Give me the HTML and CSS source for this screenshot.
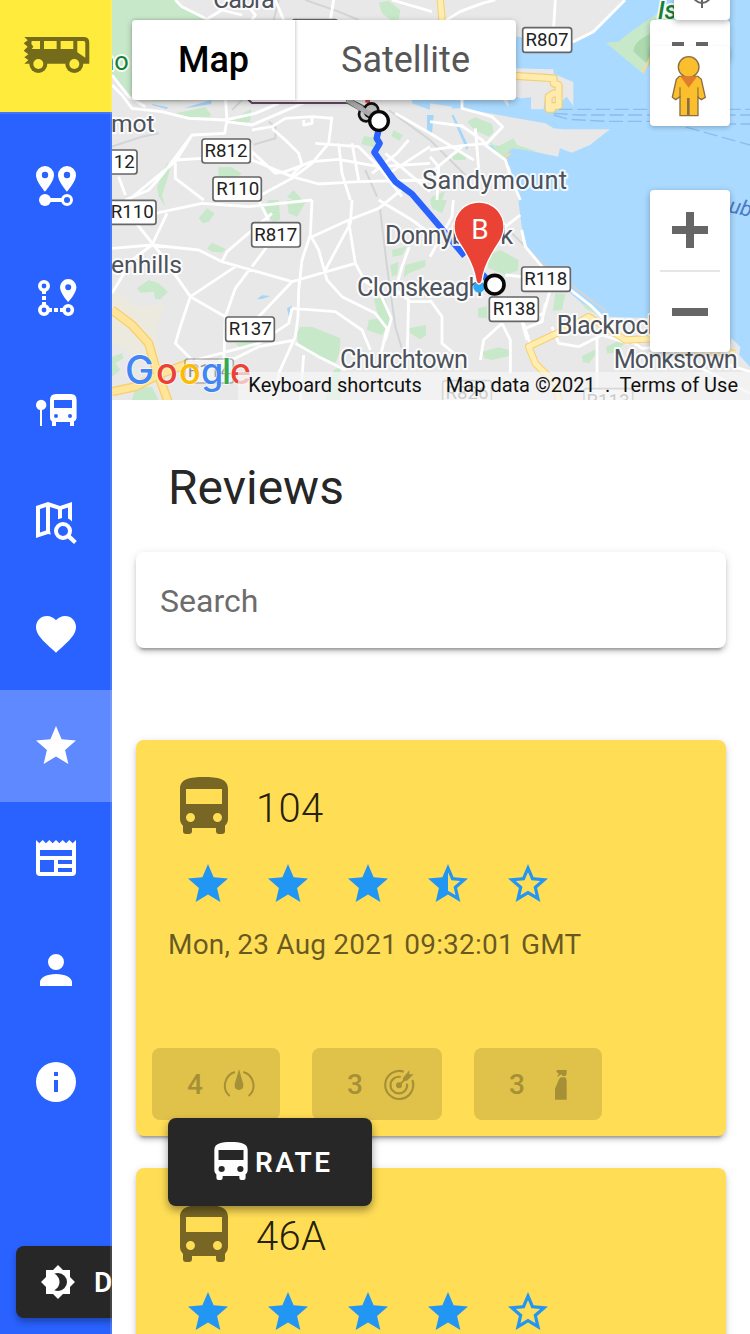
FILE: index.html
```html
<!DOCTYPE html>
<html lang="en">
<head>
<meta charset="utf-8">
<title>Reviews</title>
<link rel="stylesheet" href="styles.css">
</head>
<body>
<svg class="defs" aria-hidden="true">
  <symbol id="bus" viewBox="0 0 24 24" preserveAspectRatio="none"><path d="M18,11H6V6H18M16.5,17A1.5,1.5 0 0,1 15,15.5A1.5,1.5 0 0,1 16.5,14A1.5,1.5 0 0,1 18,15.5A1.5,1.5 0 0,1 16.5,17M7.5,17A1.5,1.5 0 0,1 6,15.5A1.5,1.5 0 0,1 7.5,14A1.5,1.5 0 0,1 9,15.5A1.5,1.5 0 0,1 7.5,17M4,16C4,16.88 4.39,17.67 5,18.22V20A1,1 0 0,0 6,21H7A1,1 0 0,0 8,20V19H16V20A1,1 0 0,0 17,21H18A1,1 0 0,0 19,20V18.22C19.61,17.67 20,16.88 20,16V6C20,2.5 16.42,2 12,2C7.58,2 4,2.5 4,6V16Z"/></symbol>
  <symbol id="star" viewBox="0 0 24 24"><path d="M12,17.27L18.18,21L16.54,13.97L22,9.24L14.81,8.62L12,2L9.19,8.62L2,9.24L7.45,13.97L5.82,21L12,17.27Z"/></symbol>
  <symbol id="star-half" viewBox="0 0 24 24"><path fill-rule="evenodd" d="M12,15.4V6.1L13.71,10.13L18.09,10.5L14.77,13.39L15.76,17.67ZM22,9.24L14.81,8.63L12,2L9.19,8.63L2,9.24L7.45,13.97L5.82,21L12,17.27L18.18,21L16.54,13.97L22,9.24Z"/></symbol>
  <symbol id="star-empty" viewBox="0 0 24 24"><path fill-rule="evenodd" d="M12,15.39L8.24,17.66L9.23,13.38L5.91,10.5L10.29,10.13L12,6.09L13.71,10.13L18.09,10.5L14.77,13.38L15.76,17.66ZM22,9.24L14.81,8.63L12,2L9.19,8.63L2,9.24L7.45,13.97L5.82,21L12,17.27L18.18,21L16.54,13.97L22,9.24Z"/></symbol>
</svg>
<div class="app">
  <aside class="sidebar">
    <div class="brand">
      <svg class="brand-icon" viewBox="68 105 202 118">
        <path fill="#756c1b" d="M72 111H252Q267 112 267 128V191H72L84 180L72 172L84 163L70 152L82 140L70 130L82 121Z"/>
        <circle cx="114" cy="192" r="27" fill="#756c1b"/><circle cx="222" cy="192" r="27" fill="#756c1b"/>
        <g fill="#ffeb3b"><circle cx="114" cy="192" r="15"/><circle cx="222" cy="192" r="15"/><path d="M94 123H119V147H94L99 140L93 132ZM131 123H169V147H131ZM181 123H219V147H181ZM231 123H250Q255 123 255 128V173L231 157Z"/></g>
      </svg>
    </div>
    <nav class="nav">
      <a class="nav-item"><svg class="icon" viewBox="0 0 24 24"><path fill-rule="evenodd" d="M6.5 2A4.5 4.5 0 0 0 2 6.5C2 9.8 6.5 14.8 6.5 14.8S11 9.8 11 6.5A4.5 4.5 0 0 0 6.500 2ZM6.500 4.900A1.600 1.600 0 1 1 6.500 8.100A1.600 1.600 0 1 1 6.500 4.900ZM17.500 2A4.500 4.500 0 0 0 13 6.500C13 9.800 17.500 14.800 17.500 14.800S22 9.800 22 6.500A4.500 4.500 0 0 0 17.500 2ZM17.500 4.900A1.600 1.600 0 1 1 17.500 8.100A1.600 1.600 0 1 1 17.500 4.900Z"/><circle cx="6.500" cy="19" r="3"/><path d="M8 18H15V20H8Z"/><circle cx="17.500" cy="19" r="2.250" class="ring"/></svg></a>
      <a class="nav-item"><svg class="icon" viewBox="0 0 24 24"><path fill-rule="evenodd" d="M18.100 2.500A4.100 4.100 0 0 0 14 6.600C14 9.600 18.100 14 18.100 14S22.200 9.600 22.200 6.600A4.100 4.100 0 0 0 18.100 2.500ZM18.100 5.100A1.500 1.500 0 1 1 18.100 8.100A1.500 1.500 0 1 1 18.100 5.100Z"/><g class="ring-thick"><circle cx="6" cy="6" r="2.100"/><circle cx="6" cy="18" r="2.100"/><circle cx="18.100" cy="18" r="2.100"/></g><path d="M5 8H7V10H5ZM5 11H7V13H5ZM5 14H7V16H5ZM8.500 17H10V19H8.500ZM11 17H13V19H11ZM14 17H15.500V19H14Z"/></svg></a>
      <a class="nav-item"><svg class="icon" viewBox="0 0 24 24"><path fill-rule="evenodd" d="M4 12C2.800 11.800 2 10.700 2 9.500A2.600 2.600 0 0 1 7.200 9.500C7.200 10.700 6.300 11.800 5 12V20H4ZM12 4H19.500Q22.300 4 22.300 7V16Q22.300 17.200 21 17.700V20H19V18H12V20H10V17.700Q9 17.200 9 16V7Q9 4 12 4ZM11 7V11H20V7ZM12 14A1 1 0 1 0 12 16A1 1 0 1 0 12 14ZM19 14A1 1 0 1 0 19 16A1 1 0 1 0 19 14Z"/></svg></a>
      <a class="nav-item"><svg class="icon" viewBox="0 0 24 24"><path fill-rule="evenodd" d="M2 4L8 2L14 4L20 2V11.800Q19.200 10.800 18 10.300V4.700L15 5.800V10L13 10.600V5.800L9 4.500V16.500L9.400 18.200L8 18L2 20ZM4 5.500V17.200L7 16.200V4.500Z"/><circle cx="15.500" cy="16.500" r="3.500" class="ring-lg"/><path d="M17.400 19.800L19 18.200L22.400 21.500L21 23Z"/></svg></a>
      <a class="nav-item"><svg class="icon" viewBox="0 0 24 24"><path d="M12,21.350L10.550,20.030C5.400,15.360 2,12.270 2,8.500C2,5.410 4.420,3 7.500,3C9.240,3 10.910,3.810 12,5.080C13.090,3.810 14.760,3 16.500,3C19.580,3 22,5.410 22,8.500C22,12.270 18.600,15.360 13.450,20.030L12,21.350Z"/></svg></a>
      <a class="nav-item nav-item-active"><svg class="icon"><use href="#star"/></svg></a>
      <a class="nav-item"><svg class="icon" viewBox="0 0 24 24"><path fill-rule="evenodd" d="M20,11H4V8H20ZM20,15H13V13H20ZM20,19H13V17H20ZM11,19H4V13H11ZM20.330,4.670L18.670,3L17,4.670L15.330,3L13.670,4.670L12,3L10.330,4.670L8.670,3L7,4.670L5.330,3L3.670,4.670L2,3V19A2,2 0 0,0 4,21H20A2,2 0 0,0 22,19V3L20.330,4.670Z"/></svg></a>
      <a class="nav-item"><svg class="icon" viewBox="0 0 24 24"><path d="M12,4A4,4 0 0,1 16,8A4,4 0 0,1 12,12A4,4 0 0,1 8,8A4,4 0 0,1 12,4M12,14C16.420,14 20,15.790 20,18V20H4V18C4,15.790 7.580,14 12,14Z"/></svg></a>
      <a class="nav-item"><svg class="icon" viewBox="0 0 24 24"><path fill-rule="evenodd" d="M13,9H11V7H13ZM13,17H11V11H13ZM12,2A10,10 0 0,0 2,12A10,10 0 0,0 12,22A10,10 0 0,0 22,12A10,10 0 0,0 12,2Z"/></svg></a>
    </nav>
    <button class="dark-toggle"><svg class="dark-icon" viewBox="0 0 24 24"><path fill-rule="evenodd" d="M12,18C11.110,18 10.260,17.800 9.500,17.450C11.560,16.500 13,14.420 13,12C13,9.580 11.560,7.500 9.500,6.550C10.260,6.200 11.110,6 12,6A6,6 0 0,1 18,12A6,6 0 0,1 12,18ZM20,8.690V4H15.310L12,0.690L8.690,4H4V8.690L0.690,12L4,15.310V20H8.690L12,23.310L15.310,20H20V15.310L23.310,12L20,8.690Z"/></svg>Dark</button>
  </aside>
  <main class="main">
    <section class="map">
      <svg class="map-canvas" viewBox="0 0 1914 1200">
        <rect width="1914" height="1200" fill="#e8e8e8"/>
        <!-- coast and harbour -->
        <path fill="#aadaff" d="M1539 0L1444 100L1384 130L1200 108V205H900V310L954 330L1044 325L1150 350L1124 435L1194 500L1219 600L1229 680L1250 755L1310 830L1364 870L1434 930L1484 950L1620 955L1854 1035L1914 1100V0Z"/>
        <g fill="#e8e8e8">
          <path d="M1200 205L1324 208L1326 222L1384 246V318L1364 290L1330 320L1300 280L1295 328H1257V292L1225 295L1185 280L1190 322L1165 290L900 260V235L1200 245ZM954 310L1020 320L1018 345L954 340ZM1050 325L1160 345L1300 370L1325 385L1354 388H1494L1434 435L1379 458L1344 445L1338 470L1204 442L1124 435L1050 400ZM1858 1015L1885 1040L1880 1080L1850 1060Z"/>
        </g>
        <path fill="#c8e8ca" d="M0 0H190L225 28L280 60V170L210 302H130L60 290L0 225ZM800 8L830 2L865 30L860 62L835 60L810 40ZM1482 128L1520 125Q1550 95 1700 0H1800L1640 150L1590 218ZM190 340L280 322L298 345L290 352H235ZM350 362L418 328L415 365L365 372ZM755 408L795 415L785 442L748 432ZM845 390L872 405L862 422L838 408ZM165 490L178 490L165 540L150 585L160 620L140 590L135 560ZM318 502L355 500L388 520L380 530H320ZM525 590L545 570L572 600L560 610ZM1065 365L1090 352L1140 372L1145 395L1132 410L1090 392ZM1130 425L1155 440L1205 415L1215 435L1280 455L1200 445L1170 475ZM1020 470L1045 455L1064 460L1060 480H1025ZM455 620L470 600H500L505 660L485 665L465 650ZM525 600H585L555 650L530 640ZM260 655L285 625L308 640L290 665L272 670ZM285 745L300 728L342 748L330 758L300 755ZM75 865L110 840L140 850L168 875L145 898H130L125 875L85 878ZM1120 770L1165 750L1220 780L1218 812L1180 825L1130 805ZM565 980L600 980L685 1015L682 1060L670 1088L600 1065L560 1040L555 1000ZM785 895H820L838 960L822 985L810 1005L765 990L770 960L800 955ZM840 750L885 738L870 765L842 770ZM835 795L860 785L855 825L840 830ZM880 795L940 780V800L890 820L875 835ZM892 985L942 975V1005L925 1018L895 1000ZM1330 880L1360 882L1350 930L1322 932ZM1405 905L1450 930L1475 955L1420 925ZM1098 925L1125 918V955L1098 952ZM1110 1055L1160 1042L1192 1050V1068L1140 1080L1118 1075ZM1410 1068L1464 1042L1450 1065L1430 1090L1412 1085ZM1482 1040L1515 1025L1538 1030L1510 1060H1485ZM0 1070L30 1060L35 1075L10 1090L25 1110L0 1130ZM60 1200L70 1165L120 1160L140 1200ZM954 600H1005L990 640L960 625ZM370 1030L440 1022L420 1043L380 1040ZM640 1200L665 1110L685 1100V1200ZM960 590L1000 572L990 600H955Z"/>
        <path fill="#acd9ad" d="M1565 155Q1560 110 1700 70L1650 135L1620 205Z"/>
        <path fill="#a5d6fa" d="M120 312L168 322L165 328L122 316ZM215 325L298 300V312L240 322ZM435 898L450 886L475 888L450 897ZM525 925L540 917L530 950ZM945 345H965L960 400L945 390ZM1025 345L1070 440L1064 450L1018 345Z"/>
        <path fill="#f9d99a" d="M1170 480L1185 460H1200L1178 478ZM1590 215L1615 165L1610 190L1595 222Z"/>
        <path fill="#eceade" d="M0 860L70 920L160 915L130 990L145 1100L0 1030Z"/>
        <!-- rail and minor lines -->
        <g fill="none" stroke="#d2d4d6" stroke-width="6"><path d="M0 440L90 410L140 400M360 330L400 290M425 434L490 415L490 380L470 365M500 0L485 60M580 0L680 35L740 60M804 625L825 800L850 980L880 1080M760 510L795 590M830 330L954 420L1060 525M1200 700L1290 790L1484 935"/></g>
        <!-- streets -->
        <g fill="none" stroke="#fff" stroke-width="8.500" stroke-linejoin="round">
          <path d="M190 0L210 20L280 55M280 60L330 30L390 45M410 20L430 45L420 60M490 0L515 60M665 0L655 60M840 0L960 35M955 90L1044 35L1110 10L1150 0M1330 0L1325 80M1539 0L1444 95L1384 125"/>
          <path d="M0 255L30 285L60 325L150 335L230 355L340 360L430 340L500 310M0 225L50 290L100 320M340 290L345 360L338 400L240 405L150 525L110 570L40 600M345 365L420 375L560 315L600 300M240 405L190 485L50 600M20 530L40 585M190 480L270 475M190 490V535L275 600M415 430L420 480L540 530L620 552L740 545L954 540M420 455L490 520L520 515L600 485L680 478L800 500L954 490M420 390L480 380L520 355L600 350L660 355M480 385L520 420L560 460L570 495L535 530M600 350V370L575 375V360M660 350L650 430L600 490L540 535L420 600M610 430L740 440L800 500L870 590M680 430L690 520L715 600M720 430L740 540M850 340L954 400L1085 480M780 520L855 460L890 420M820 460L954 575M830 520L954 440"/>
          <path d="M1050 300V325L1140 350L1172 380L1120 435L1180 480L1200 540L1225 600M954 365L1050 378L1110 420L1124 435M954 450L1050 437L1124 430M1090 385L1100 505M954 520L1050 440M1090 520V560M954 470L980 500L975 600"/>
          <path d="M0 745L120 735L260 750L330 785L540 845L730 790M130 640L270 610L410 620L600 600M120 735L165 640M65 660L145 760L235 890L340 950M120 735L60 780L0 880M235 890L370 800M235 890L205 980L190 1030L240 1080M330 785L345 755L480 640M540 845L450 940L420 970M420 800L480 720M415 805L370 865L340 950L335 1100M600 600L595 705L570 780L560 870L558 950L550 1010L500 1120L490 1200M595 705L620 750L645 840L690 890L790 940L825 985L805 1070M600 710L710 660L800 625L880 560M720 600L715 670L640 810M710 665L730 790L760 845L800 870L838 955L820 1020M800 600L900 660L954 700M892 740L870 800L850 870L890 900L885 1080M885 905H954M540 925L670 935L750 990L775 1050M540 925L530 970L440 1030L250 1080M550 1020L440 1040L370 1075L320 1080M550 1030L620 1070L700 1110M575 1065L565 1200M440 600L470 660"/>
          <path d="M1024 600L1020 650L954 770M1225 645L1180 680L1150 740M1229 690L1240 740L1290 800L1370 865L1440 920L1510 990L1590 1045L1680 1040L1914 1115M1180 825L1320 840L1360 865M1320 850L1295 940L1230 965L1245 1020M1235 970L1255 1035M1320 980L1340 1030L1400 1040L1470 1005L1550 1030M1455 1010V1200M1170 970L1195 1020V1120M954 900L990 950V1030L1050 1080M1170 970L1115 1020L1105 1080M1300 910L1290 965L1240 985M1720 1080L1914 1180"/>
        </g>
        <g fill="none" stroke-linejoin="round">
          <path stroke="#f9cf6b" stroke-width="28" d="M0 930L60 975L110 1030L130 1100L170 1210M0 1175L70 1160L150 1120L230 1090"/>
          <path stroke="#ffe59a" stroke-width="20" d="M0 930L60 975L110 1030L130 1100L170 1210M0 1175L70 1160L150 1120L230 1090"/>
          <path stroke="#f9cf6b" stroke-width="22" d="M1365 985L1250 1040L1270 1090L1330 1150L1340 1200M1340 1000L1430 950L1540 1020L1640 1015M1700 1050L1870 1060M985 0L990 60"/>
          <path stroke="#ffeeb0" stroke-width="16" d="M1365 985L1250 1040L1270 1090L1330 1150L1340 1200M1340 1000L1430 950L1540 1020L1640 1015M1700 1050L1870 1060M985 0L990 60"/>
          <path stroke="#f3cf73" stroke-width="24" d="M1200 227L1325 235V250L1340 255V318H1320V327H1310V290L1325 280H1337"/><path stroke="#ffebab" stroke-width="17" d="M1200 227L1325 235V250L1340 255V318H1320V327H1310V290L1325 280H1337"/>
          <g stroke="#8cbcf0" stroke-width="4" stroke-dasharray="42 14"><path d="M1340 328H1914M1325 340L1400 345H1914M1325 345L1370 358L1480 364H1660M1614 350L1700 375L1914 435M1830 372H1914"/></g>
        </g>
        <!-- route -->
        <path fill="none" stroke="#2962ff" stroke-width="19" stroke-linejoin="round" d="M801 385L794 415L803 430L787 457L835 525L850 545L900 582L954 645L1058 768M1100 810L1140 855"/>
        <path fill="#fff" stroke="#654664" stroke-width="6" d="M410 200V300L420 309H705V200"/>
        <path stroke="#bbb" stroke-width="15" d="M705 300L775 345"/><path stroke="#555" stroke-width="4" fill="none" d="M715 298L800 340M705 309L770 345"/>
        <path fill="#e53935" d="M760 296H774V308H760Z"/>
        <circle cx="762" cy="343" r="21" fill="#ccc" stroke="#111" stroke-width="8"/><circle cx="778" cy="331" r="21" fill="#bbb" stroke="#111" stroke-width="8"/><path stroke="#aaa" stroke-width="15" d="M710 302L785 350"/>
        <circle cx="801" cy="363" r="28" fill="#fff" stroke="#080808" stroke-width="10"/>
        <!-- labels -->
        <g class="place">
          <text x="303" y="24" textLength="185">Cabra</text>
          <text class="edge" x="128" y="395" text-anchor="end">Ballyfermot</text>
          <text class="edge" x="210" y="818" text-anchor="end">Greenhills</text>
          <text x="930" y="567" textLength="435">Sandymount</text>
          <text x="819" y="731" textLength="384">Donnybrook</text>
          <text x="735" y="887" textLength="376">Clonskeagh</text>
          <text x="684" y="1104" textLength="384">Churchtown</text>
          <text x="1334" y="1001" textLength="312">Blackrock</text>
          <text x="1505" y="1103" textLength="372">Monkstown</text>
          <text class="park" x="50" y="210" text-anchor="end">Pho</text>
          <text class="park island" x="1637" y="58">Is</text>
          <text class="sea" transform="translate(1848 636) rotate(13)">ub</text>
        </g>
        <g class="shield">
          <rect x="541" y="59" width="136" height="72" rx="8"/>
          <rect x="270" y="417" width="145" height="72" rx="8"/><text x="342" y="472">R812</text>
          <rect x="303" y="531" width="145" height="72" rx="8"/><text x="377" y="586">R110</text>
          <rect x="-70" y="450" width="145" height="72" rx="8"/><text x="4" y="505">R112</text>
          <rect x="-13" y="601" width="145" height="72" rx="8"/><text x="61" y="655">R110</text>
          <rect x="419" y="668" width="146" height="73" rx="8"/><text x="491" y="724">R817</text>
          <rect x="341" y="951" width="146" height="73" rx="8"/><text x="415" y="1006">R137</text>
          <rect x="1229" y="801" width="146" height="73" rx="8"/><text x="1301" y="856">R118</text>
          <rect x="1132" y="891" width="147" height="73" rx="8"/><text x="1207" y="946">R138</text>
          <rect x="1232" y="83" width="147" height="74" rx="8"/><text x="1305" y="139">R807</text>
          <g opacity=".45"><rect x="219" y="1077" width="145" height="72" rx="8"/><text x="292" y="1131">R114</text></g>
          <g opacity=".7"><rect x="992" y="1142" width="146" height="73" rx="8"/><text x="1065" y="1197">R826</text><rect x="1416" y="1166" width="146" height="73" rx="8"/><text x="1488" y="1221">R113</text></g>
        </g>
        <!-- destination -->
        <circle cx="1101" cy="861" r="17" fill="#30a9f5"/>
        <circle cx="1148" cy="854" r="28" fill="#fff" stroke="#080808" stroke-width="11"/>
        <path fill="#ea4335" stroke="#fff" stroke-width="4" d="M1101 606C1058 606 1026 640 1026 681C1026 710 1042 727 1059 756Q1086 801 1092 842Q1095 852 1101 852Q1107 852 1110 842Q1116 801 1143 756C1160 727 1176 710 1176 681C1176 640 1144 606 1101 606Z"/>
        <text class="pin-letter" x="1104" y="717">B</text>
      </svg>
      <div class="map-type"><span class="map-type-on">Map</span><span class="map-type-off">Satellite</span></div>
      <div class="fullscreen"><i class="dash"></i><i class="dash"></i></div>
      <div class="compass"><svg class="compass-icon" viewBox="0 0 24 14"><circle cx="12" cy="-1" r="9" fill="none" stroke="#666" stroke-width="2"/><path stroke="#666" stroke-width="2" d="M12 3V13"/></svg></div>
      <div class="pegman"><svg class="pegman-icon" viewBox="724 165 106 186"><g fill="#fbbf2d" stroke="#8a6e43" stroke-width="4"><path d="M749 229H805L815 238L827 292L815 299L805 292V347H778V296H774V347H751V290L738 299L728 292L740 238Z"/><circle cx="777" cy="201" r="31"/></g><path fill="#e07c2b" d="M752 229H803L777 263Z"/><path stroke="#7c613e" stroke-width="3" d="M751 262V290M805 262V292"/></svg></div>
      <div class="zoom"><span class="zoom-btn zoom-in"></span><span class="zoom-btn zoom-out"></span></div>
      <svg class="google" viewBox="0 0 130 50"><text y="33"><tspan class="cap" x="0" fill="#4285f4">G</tspan><tspan x="31" fill="#ea4335">o</tspan><tspan x="54" fill="#fbbc04">o</tspan><tspan x="76" fill="#4285f4">g</tspan><tspan x="97" fill="#34a853">l</tspan><tspan x="105" fill="#ea4335">e</tspan></text></svg>
      <div class="attribution"><span>Keyboard shortcuts</span><span class="map-data">Map data ©2021</span><span class="sep">.</span><span>Terms of Use</span></div>
    </section>
    <section class="reviews">
      <h1 class="title">Reviews</h1>
      <div class="search">Search</div>
      <article class="card">
        <header class="card-head"><svg class="card-bus"><use href="#bus"/></svg><span class="route">104</span></header>
        <div class="stars"><svg><use href="#star"/></svg><svg><use href="#star"/></svg><svg><use href="#star"/></svg><svg><use href="#star-half"/></svg><svg><use href="#star-empty"/></svg></div>
        <div class="date">Mon, 23 Aug 2021 09:32:01 GMT</div>
        <div class="chips">
          <div class="chip"><span>4</span><svg viewBox="273 112 108 108"><path fill="none" stroke="currentColor" stroke-width="6" d="M315 127A42 42 0 0 0 299 199M340 127A42 42 0 0 1 356 199"/><path d="M327 118L340 164Q341 181 327 181Q313 181 314 164Z"/></svg></div>
          <div class="chip chip-wide"><span>3</span><svg viewBox="756 110 108 108"><g fill="none" stroke="currentColor" stroke-width="6.500"><path d="M824 124A42 42 0 1 0 850 149"/><path d="M815 140A25 25 0 1 0 834 160" /></g><circle cx="810" cy="165" r="9"/><path stroke="currentColor" stroke-width="6" d="M810 165L840 135"/><path d="M822 143L841 120V132H854L834 151H822Z"/></svg></div>
          <div class="chip"><span>3</span><svg viewBox="1239 110 108 108"><path d="M1281 119H1310V130L1307 137H1297L1294 132L1281 141L1286 130L1279 124ZM1292 141H1306Q1310 145 1310 153V208H1275V175L1287 147Z"/></svg></div>
        </div>
      </article>
      <article class="card">
        <header class="card-head"><svg class="card-bus"><use href="#bus"/></svg><span class="route">46A</span></header>
        <div class="stars"><svg><use href="#star"/></svg><svg><use href="#star"/></svg><svg><use href="#star"/></svg><svg><use href="#star"/></svg><svg><use href="#star-empty"/></svg></div>
      </article>
    </section>
    <button class="rate"><svg class="rate-icon"><use href="#bus"/></svg>RATE</button>
  </main>
</div>
</body>
</html>
```
FILE: styles.css
```css
* { box-sizing: border-box; }
body { margin: 0; font-family: Roboto, "Liberation Sans", sans-serif; color: rgba(0,0,0,.87); background: #fff; }
svg { display: block; fill: currentColor; flex: none; }
button { border: 0; font: inherit; }
.defs { position: absolute; width: 0; height: 0; }
.app { display: flex; height: 1334px; overflow: hidden; }

.sidebar { position: relative; display: flex; flex-direction: column; width: 112px; flex: none; background: #2962ff; color: #fff; overflow: hidden; }
.sidebar::after { content: ""; position: absolute; top: 0; right: 0; bottom: 0; width: 2px; background: rgba(255,255,255,.14); }
.brand { display: flex; align-items: center; justify-content: center; height: 114px; background: #ffeb3b; border-bottom: 2px solid #4375ff; }
.brand-icon { width: 67.300px; height: 39.300px; margin: 0 0 2px 1px; }
.nav { padding-top: 16px; }
.nav-item { display: flex; align-items: center; justify-content: center; height: 112px; }
.nav-item-active { background: #5f89ff; }
.icon { width: 48px; height: 48px; }
.ring, .ring-thick, .ring-lg { fill: none; stroke: currentColor; stroke-width: 1.500; }
.ring-thick { stroke-width: 1.800; }
.ring-lg { stroke-width: 2; }
.dark-toggle { display: flex; align-items: center; width: 180px; height: 72px; margin: auto 0 16px 16px; padding: 0 24px; border-radius: 8px; background: #272727; color: #fff; font-size: 28px; font-weight: 600; letter-spacing: 2.500px; text-transform: uppercase; box-shadow: 0 4px 6px rgba(0,0,0,.3); }
.dark-icon { width: 36px; height: 36px; margin-right: 18px; }

.main { position: relative; flex: 1; min-width: 0; }
.map { position: relative; height: 400px; overflow: hidden; }
.map-canvas { width: 638px; height: 400px; }
.place { font-size: 76px; fill: #4d535c; stroke: #fff; stroke-opacity: .85; stroke-width: 12px; paint-order: stroke; stroke-linejoin: round; }
.edge { font-size: 74px; }
.park { fill: #188038; }
.island { font-style: italic; font-weight: 500; }
.sea { fill: #4a7bc4; stroke: none; font-style: italic; font-size: 64px; }
.shield { font-size: 56px; text-anchor: middle; fill: #222; }
.shield rect { fill: #fff; stroke: #666; stroke-width: 5px; }
.pin-letter { font-size: 84px; text-anchor: middle; fill: #fff; }

.map-type, .fullscreen, .compass, .pegman, .zoom { position: absolute; background: #fff; box-shadow: 0 2px 6px rgba(0,0,0,.3); }
.map-type { display: flex; left: 20px; top: 20px; width: 384px; height: 80px; border-radius: 4px; font-size: 36px; line-height: 81px; text-align: center; }
.map-type-on { width: 163px; font-weight: 500; color: #000; box-shadow: 1px 0 3px rgba(0,0,0,.2); }
.map-type-off { flex: 1; color: #565656; }
.fullscreen { display: flex; justify-content: center; gap: 12px; top: 20px; right: 20px; width: 80px; height: 40px; padding-top: 22px; border-radius: 4px; }
.dash { width: 12px; height: 4px; background: #666; }
.compass { top: -20px; right: 20px; width: 56px; height: 40px; padding: 20px 0 0 16px; border-radius: 4px; overflow: hidden; }
.compass-icon { width: 24px; height: 14px; margin-top: -5px; }
.pegman { display: grid; place-items: center; top: 46px; right: 20px; width: 80px; height: 80px; padding-right: 2px; border-radius: 4px; box-shadow: 0 2px 4px rgba(0,0,0,.2); }
.pegman-icon { width: 35.300px; height: 62px; }
.zoom { top: 190px; right: 20px; width: 80px; height: 162px; border-radius: 4px; display: grid; grid-template-rows: 82px 80px; }
.zoom-btn { display: grid; place-items: center; margin: 0 10px; }
.zoom-in { border-bottom: 2px solid #e6e6e6; }
.zoom-btn::before, .zoom-in::after { content: ""; grid-area: 1 / 1; width: 36px; height: 8px; background: #666; }
.zoom-in::after { width: 8px; height: 36px; }
.google { position: absolute; left: 13px; top: 351px; width: 130px; height: 50px; font: 500 36px Inter, sans-serif; stroke: #fff; stroke-opacity: .6; stroke-width: 2px; paint-order: stroke; }
.google .cap { font-size: 39px; }
.attribution { position: absolute; right: 0; bottom: 0; display: flex; justify-content: flex-end; width: 512px; height: 28px; padding-right: 12px; background: rgba(245,245,245,.72); color: #111; font-size: 20px; line-height: 26px; white-space: nowrap; }
.map-data { margin-left: 24px; }
.sep { width: 24px; text-align: center; }

.reviews { padding: 56px 24px 0; }
.title { margin: 0 0 0 32px; height: 64px; font-size: 48px; font-weight: 400; line-height: 64px; }
.search { height: 96px; margin: 32px 0 92px; padding-left: 24px; border-radius: 8px; background: #fff; color: #6c6c6c; font-size: 32px; line-height: 98px; box-shadow: 0 6px 2px -4px rgba(0,0,0,.2), 0 4px 4px rgba(0,0,0,.14), 0 2px 10px rgba(0,0,0,.12); }
.card { height: 396px; margin-bottom: 32px; padding-top: 31px; border-radius: 8px; background: #ffdd55; box-shadow: 0 6px 2px -4px rgba(0,0,0,.2), 0 4px 4px rgba(0,0,0,.14), 0 2px 10px rgba(0,0,0,.12); }
.card-head { display: flex; align-items: center; height: 72px; padding-left: 32px; }
.card-bus { width: 72px; height: 72px; color: #786625; }
.route { margin: 3px 0 0 16px; font-size: 40px; font-weight: 300; letter-spacing: .300px; color: rgba(0,0,0,.87); }
.stars { display: flex; gap: 32px; margin: 17px 0 0 48px; color: #2196f3; }
.stars svg { width: 48px; height: 48px; }
.date { margin: 15px 0 0 32px; height: 44px; color: rgba(0,0,0,.6); font-size: 28px; line-height: 44px; letter-spacing: .200px; }
.chips { display: flex; gap: 32px; margin: 81px 0 0 16px; color: #a69037; }
.chip { display: flex; align-items: center; width: 128px; height: 72px; padding-left: 35px; border-radius: 8px; background: #e0c24b; font-size: 28px; letter-spacing: 2.500px; font-weight: 500; }
.chip svg { width: 36px; height: 36px; margin-left: 16px; margin-top: 1px; }
.chip-wide { width: 130px; }
.rate { position: absolute; left: 56px; top: 1118px; display: flex; align-items: center; width: 204px; height: 88px; padding: 0 0 0 38px; border-radius: 8px; background: #272727; color: #fff; font-size: 28px; font-weight: 600; letter-spacing: 2.400px; box-shadow: 0 4px 8px rgba(0,0,0,.4); }
.rate-icon { width: 50px; height: 48px; margin-right: -1px; }
```
